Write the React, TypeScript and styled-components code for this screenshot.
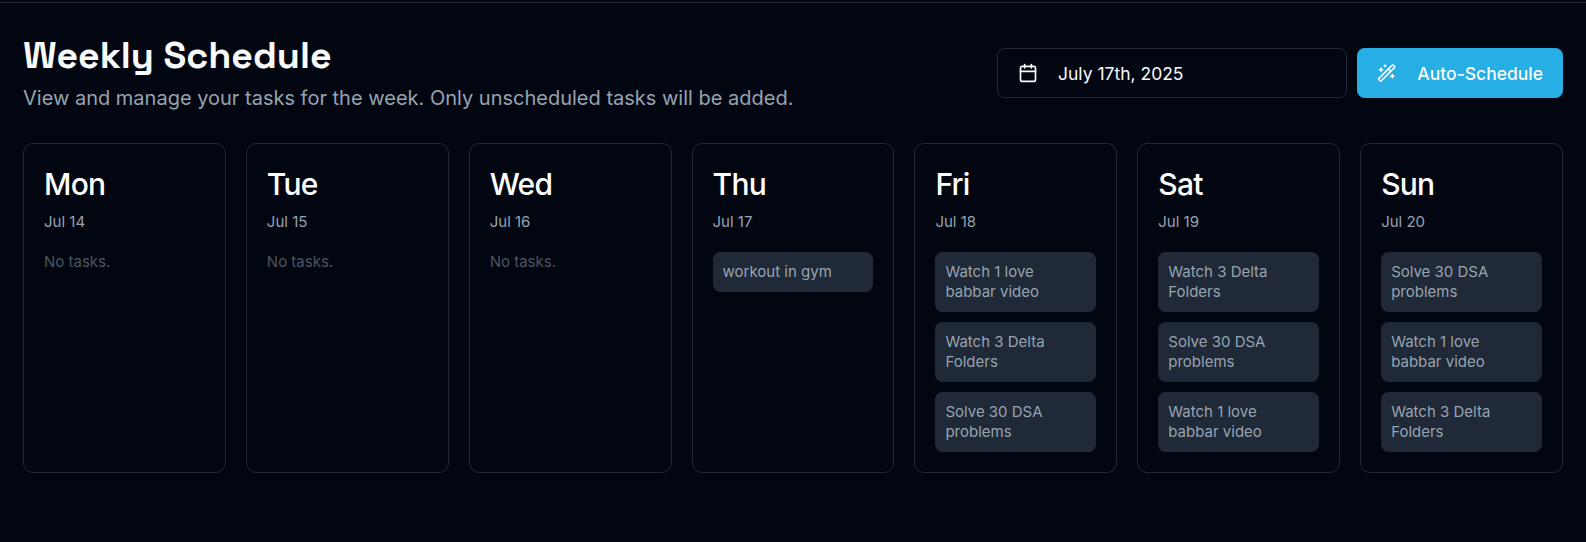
import React from 'react';
import styled, { createGlobalStyle } from 'styled-components';
import { Calendar, WandSparkles } from 'lucide-react';

const GlobalStyle = createGlobalStyle`
  *, *::before, *::after { box-sizing: border-box; }
  html, body { margin: 0; height: 100%; background: #020610; }
  body { font-family: Inter, "Liberation Sans", sans-serif; color: #f9fafb; overflow: hidden; }
  h1, h2, p { margin: 0; }
`;

const Page = styled.main`
  height: 540px;
  border-top: 1px solid #1f2937;
  margin-top: 2px;
  padding: 32px 23px 0;
`;

const Header = styled.header`
  display: flex;
  align-items: center;
  justify-content: space-between;
  height: 76px;
`;

const Title = styled.h1`
  font-family: "Space Grotesk", Inter, sans-serif;
  font-size: 37.5px;
  line-height: 40px;
  font-weight: 700;
`;

const Subtitle = styled.p`
  margin-top: 9px;
  margin-bottom: -1px;
  font-size: 20px;
  line-height: 28px;
  color: #98a3b0;
`;

const Actions = styled.div`
  display: flex;
  gap: 10px;
`;

const Button = styled.button<{ $primary?: boolean }>`
  display: flex;
  align-items: center;
  gap: ${(p) => (p.$primary ? '21px' : '20px')};
  width: ${(p) => (p.$primary ? '206px' : '350px')};
  height: 50px;
  padding: 0 ${(p) => (p.$primary ? '19px' : '20px')};
  border: 1px solid ${(p) => (p.$primary ? '#26aee5' : '#1f2937')};
  border-radius: 7.5px;
  background: ${(p) => (p.$primary ? '#26aee5' : 'transparent')};
  color: #f9fafb;
  font: ${(p) => (p.$primary ? 500 : 400)} 17.5px/25px Inter, sans-serif;
  white-space: nowrap;
`;

const Week = styled.section`
  display: grid;
  grid-template-columns: repeat(7, minmax(0, 1fr));
  gap: 20px;
  height: 330px;
  margin-top: 32px;
`;

const DayCard = styled.article`
  padding: 20px;
  border: 1px solid #1f2937;
  border-radius: 10px;
`;

const DayName = styled.h2`
  font-size: 30px;
  line-height: 40px;
  font-weight: 500;
  letter-spacing: -0.75px;
  color: #fff;
`;

const DayDate = styled.p`
  margin-top: 8px;
  font-size: 15px;
  line-height: 20px;
  color: #98a3b0;
`;

const Empty = styled.p`
  margin-top: 20px;
  font-size: 15px;
  line-height: 20px;
  color: #4c5560;
`;

const Tasks = styled.div`
  display: flex;
  flex-direction: column;
  gap: 10px;
  margin-top: 20px;
`;

const Task = styled.div`
  padding: 10px;
  border-radius: 7.5px;
  background: #1f2937;
  color: #98a3b0;
  font-size: 15px;
  line-height: 20px;
`;

const watch = 'Watch 1 love babbar video';
const delta = 'Watch 3 Delta Folders';
const dsa = 'Solve 30 DSA problems';

const days = [
  { name: 'Mon', date: 'Jul 14', tasks: [] as string[] },
  { name: 'Tue', date: 'Jul 15', tasks: [] },
  { name: 'Wed', date: 'Jul 16', tasks: [] },
  { name: 'Thu', date: 'Jul 17', tasks: ['workout in gym'] },
  { name: 'Fri', date: 'Jul 18', tasks: [watch, delta, dsa] },
  { name: 'Sat', date: 'Jul 19', tasks: [delta, dsa, watch] },
  { name: 'Sun', date: 'Jul 20', tasks: [dsa, watch, delta] },
];

export default function App() {
  return (
    <>
      <GlobalStyle />
      <Page>
        <Header>
          <div>
            <Title>Weekly Schedule</Title>
            <Subtitle>View and manage your tasks for the week. Only unscheduled tasks will be added.</Subtitle>
          </div>
          <Actions>
            <Button><Calendar size={20} />July 17th, 2025</Button>
            <Button $primary><WandSparkles size={20} />Auto-Schedule</Button>
          </Actions>
        </Header>
        <Week>
          {days.map((day) => (
            <DayCard key={day.name}>
              <DayName>{day.name}</DayName>
              <DayDate>{day.date}</DayDate>
              {day.tasks.length === 0 ? (
                <Empty>No tasks.</Empty>
              ) : (
                <Tasks>{day.tasks.map((task) => <Task key={task}>{task}</Task>)}</Tasks>
              )}
            </DayCard>
          ))}
        </Week>
      </Page>
    </>
  );
}
